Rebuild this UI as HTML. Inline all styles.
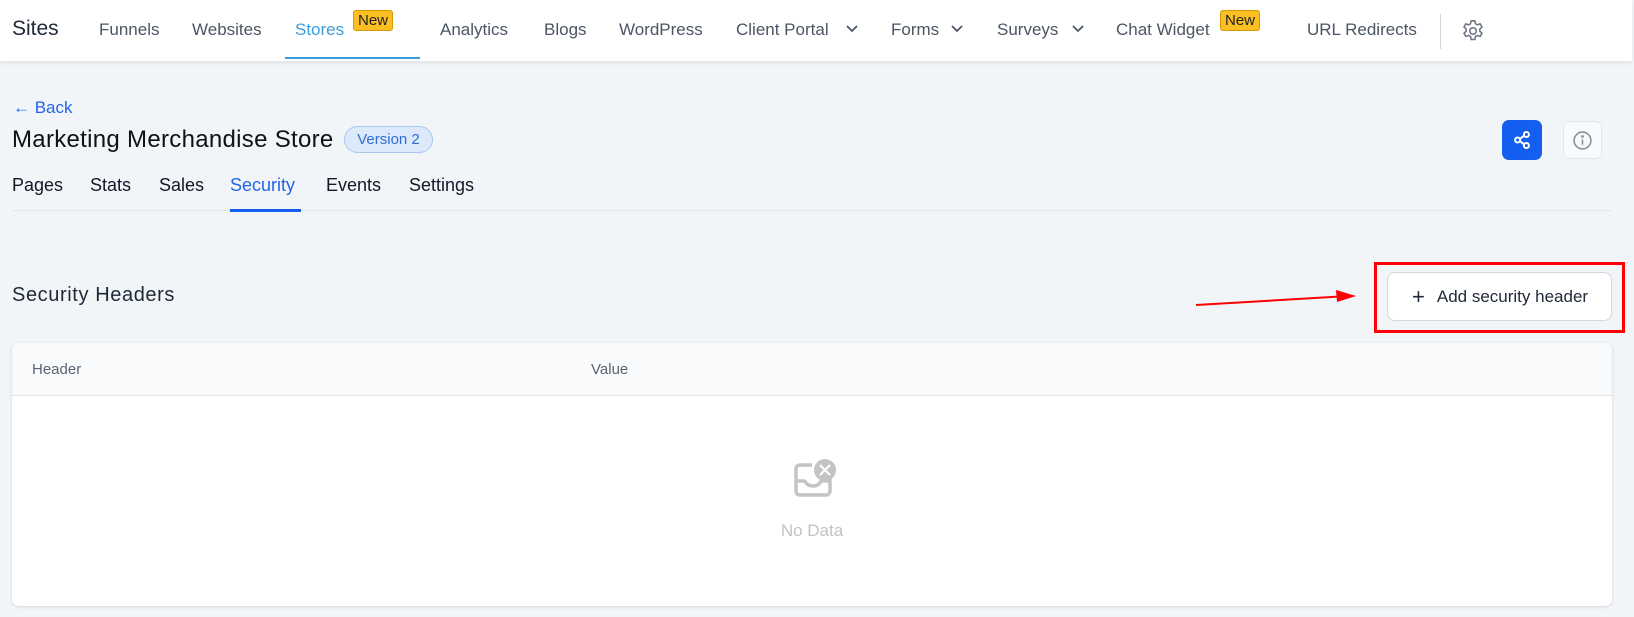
<!DOCTYPE html>
<html><head><meta charset="utf-8"><style>
*{box-sizing:border-box;margin:0;padding:0}
body{width:1634px;height:617px;overflow:hidden;background:#f1f5f8;font-family:"Liberation Sans",Arial,sans-serif;position:relative}
.a{position:absolute;white-space:nowrap}
.hdr{position:absolute;left:0;top:0;width:1632px;height:61px;background:#fff;box-shadow:0 2px 4px rgba(0,0,0,.08)}
.nav{font-size:17px;color:#4b5563;top:20px}
.new{position:absolute;background:#fbbf24;border:1px solid #d49b06;border-radius:3px;font-size:15px;color:#222;height:21px;line-height:19px;padding:0 4px;top:10px}
.tab{font-size:18px;color:#111827;top:175px}
</style></head><body>
<div class="hdr"></div>
<div class="a" style="left:12px;top:17px;font-size:21px;color:#1f2937">Sites</div>
<div class="a nav" style="left:99px">Funnels</div>
<div class="a nav" style="left:192px">Websites</div>
<div class="a nav" style="left:295px;color:#3b9edb">Stores</div>
<div class="new" style="left:353px">New</div>
<div class="a" style="left:285px;top:57px;width:135px;height:2px;background:#3b9edb"></div>
<div class="a nav" style="left:440px">Analytics</div>
<div class="a nav" style="left:544px">Blogs</div>
<div class="a nav" style="left:619px">WordPress</div>
<div class="a nav" style="left:736px">Client Portal</div>
<div class="a nav" style="left:891px">Forms</div>
<div class="a nav" style="left:997px">Surveys</div>
<svg class="a" style="left:845px;top:24px" width="14" height="10" viewBox="0 0 14 10"><path d="M2 2l5 5 5-5" fill="none" stroke="#4b5563" stroke-width="1.8"/></svg>
<svg class="a" style="left:950px;top:24px" width="14" height="10" viewBox="0 0 14 10"><path d="M2 2l5 5 5-5" fill="none" stroke="#4b5563" stroke-width="1.8"/></svg>
<svg class="a" style="left:1071px;top:24px" width="14" height="10" viewBox="0 0 14 10"><path d="M2 2l5 5 5-5" fill="none" stroke="#4b5563" stroke-width="1.8"/></svg>
<div class="a nav" style="left:1116px">Chat Widget</div>
<div class="new" style="left:1220px">New</div>
<div class="a nav" style="left:1307px">URL Redirects</div>
<div class="a" style="left:1440px;top:14px;width:1px;height:35px;background:#d1d5db"></div>
<svg class="a" style="left:1460px;top:18px" width="26" height="26" viewBox="0 0 24 24" fill="none" stroke="#6b7280" stroke-width="1.4"><path d="M10.3 2.6h3.4l.6 2.7 1.7 1 2.6-.9 1.7 2.9-2 1.9v2l2 1.9-1.7 2.9-2.6-.9-1.7 1-.6 2.7h-3.4l-.6-2.7-1.7-1-2.6.9-1.7-2.9 2-1.9v-2l-2-1.9 1.7-2.9 2.6.9 1.7-1z"/><circle cx="12" cy="12" r="3"/></svg>

<div class="a" style="left:13px;top:98px;font-size:17px;color:#2563eb">&#8592; Back</div>
<div class="a" style="left:12px;top:126px;font-size:24px;letter-spacing:.3px;color:#111">Marketing Merchandise Store</div>
<div class="a" style="left:344px;top:126px;width:89px;height:27px;border:1px solid #a8c8f0;background:#dbe9fb;border-radius:14px;font-size:15px;color:#2f6fd6;text-align:center;line-height:25px">Version 2</div>
<div class="a" style="left:1502px;top:120px;width:40px;height:40px;background:#155eef;border-radius:7px"></div>
<svg class="a" style="left:1511px;top:129px" width="22" height="22" viewBox="0 0 20 20" fill="none" stroke="#fff" stroke-width="1.8"><circle cx="14" cy="5" r="2.3"/><circle cx="6" cy="10" r="2.3"/><circle cx="14" cy="15" r="2.3"/><path d="M8 9l4-3M8 11l4 3"/></svg>
<div class="a" style="left:1563px;top:121px;width:39px;height:38px;background:#f8fafc;border:1px solid #e3e7ec;border-radius:7px"></div>
<svg class="a" style="left:1572px;top:130px" width="21" height="21" viewBox="0 0 20 20" fill="none" stroke="#8a919c" stroke-width="1.5"><circle cx="10" cy="10" r="8"/><path d="M10 9v5"/><circle cx="10" cy="6.2" r=".6" fill="#8a919c"/></svg>

<div class="a tab" style="left:12px">Pages</div>
<div class="a tab" style="left:90px">Stats</div>
<div class="a tab" style="left:159px">Sales</div>
<div class="a tab" style="left:230px;color:#2563eb">Security</div>
<div class="a tab" style="left:326px">Events</div>
<div class="a tab" style="left:409px">Settings</div>
<div class="a" style="left:12px;top:210px;width:1600px;height:1px;background:#e2e6ea"></div>
<div class="a" style="left:230px;top:209px;width:71px;height:3px;background:#155eef"></div>

<div class="a" style="left:12px;top:284px;font-size:20px;letter-spacing:.6px;color:#1f2937">Security Headers</div>
<svg class="a" style="left:0;top:0" width="1634" height="617"><line x1="1196" y1="305" x2="1340" y2="296.5" stroke="#f00" stroke-width="2"/><path d="M1356 296 L1336 290 L1337 302 Z" fill="#f00"/></svg>
<div class="a" style="left:1374px;top:262px;width:251px;height:71px;border:3px solid #f00"></div>
<div class="a" style="left:1387px;top:272px;width:225px;height:49px;background:#fff;border:1px solid #d3d8de;border-radius:8px;font-size:17px;color:#1f2937;line-height:47px;padding-left:24px"><span style="font-size:22px;vertical-align:-2px;margin-right:12px">+</span>Add security header</div>

<div class="a" style="left:12px;top:343px;width:1600px;height:263px;background:#fff;border-radius:7px;box-shadow:0 1px 3px rgba(0,0,0,.12);overflow:hidden">
<div style="height:53px;background:#f8fafb;border-bottom:1px solid #e5e7eb;position:relative;font-size:15px;color:#5b6472">
<span class="a" style="left:20px;top:18px">Header</span><span class="a" style="left:579px;top:18px">Value</span></div>
<svg class="a" style="left:780px;top:115px" width="46" height="42" viewBox="0 0 46 42" fill="none"><path d="M20 7H8a4 4 0 0 0-4 4v22a4 4 0 0 0 4 4h26a4 4 0 0 0 4-4V20" stroke="#c4c4c4" stroke-width="3.5"/><path d="M4 23h8c2 0 2 5 9 5s7-5 9-5h8" stroke="#c4c4c4" stroke-width="3.5"/><circle cx="33" cy="12" r="11" fill="#c4c4c4"/><path d="M28 7l10 10M38 7L28 17" stroke="#fff" stroke-width="2"/></svg>
<div class="a" style="left:0;width:1600px;text-align:center;top:178px;font-size:17px;color:#c2c2c2">No Data</div>
</div>
</body></html>
